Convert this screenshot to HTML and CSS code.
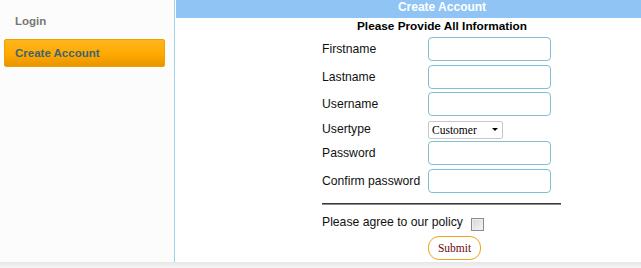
FILE: index.html
```html
<!DOCTYPE html>
<html>
<head>
<meta charset="utf-8">
<link rel="stylesheet" href="styles.css">
</head>
<body>
<div class="page">
  <aside class="sidebar">
    <div class="nav-link">Login</div>
    <div class="nav-active">Create Account</div>
  </aside>
  <main class="main">
    <div class="header">Create Account</div>
    <div class="title">Please Provide All Information</div>
    <form class="form">
      <div class="grid">
        <label class="lbl">Firstname</label><input class="txt" type="text">
        <label class="lbl">Lastname</label><input class="txt" type="text">
        <label class="lbl">Username</label><input class="txt" type="text">
        <label class="lbl">Usertype</label>
        <span class="select-wrap"><select class="sel"><option>Customer</option></select></span>
        <label class="lbl">Password</label><input class="txt" type="password">
        <label class="lbl">Confirm password</label><input class="txt" type="password">
      </div>
      <div class="rule"></div>
      <div class="policy"><span class="lbl">Please agree to our policy</span><input class="chk" type="checkbox"></div>
      <div class="actions"><button class="submit" type="button">Submit</button></div>
    </form>
  </main>
</div>
<div class="footer-band"></div>
</body>
</html>
```

FILE: styles.css
```css
html, body {
  margin: 0;
  padding: 0;
  overflow: hidden;
  background: #f3f3f3;
  font-family: "Liberation Sans", Arial, sans-serif;
}
.page {
  display: flex;
  height: 262px;
  background: #fff;
}
.sidebar {
  width: 174px;
  flex-shrink: 0;
  background: #fcfcfc;
  border-right: 1px solid #9fd3ea;
  padding-top: 14px;
}
.nav-link {
  padding-left: 15px;
  font-size: 11.5px;
  font-weight: bold;
  line-height: 15px;
  color: #777;
}
.nav-active {
  margin: 10px 0 0 4px;
  width: 161px;
  height: 28px;
  box-sizing: border-box;
  border: 1px solid #eaa300;
  border-radius: 2px;
  background: linear-gradient(#ffb51d, #ffa900 55%, #e89500);
  color: #3d6475;
  font-size: 11.5px;
  font-weight: bold;
  line-height: 26px;
  padding-left: 10px;
}
.main {
  margin-left: 1px;
  flex: 1;
  min-width: 0;
}
.header {
  height: 18px;
  background: #8fc4f5;
  color: #fff;
  font-size: 12px;
  font-weight: bold;
  line-height: 15px;
  text-align: center;
  padding-left: 67px;
}
.title {
  margin-top: 1px;
  padding-left: 67px;
  font-size: 11.8px;
  font-weight: bold;
  line-height: 15px;
  text-align: center;
  color: #000;
}
.form {
  width: 239px;
  margin: 3px 0 0 146px;
}
.grid {
  display: grid;
  grid-template-columns: 106px 123px;
  row-gap: 3.6px;
  align-items: center;
}
.lbl {
  font-size: 12.2px;
  line-height: 15px;
  color: #111;
  white-space: nowrap;
  padding-top: 1px;
}
.txt {
  width: 123px;
  height: 24px;
  box-sizing: border-box;
  margin: 0;
  border: 1px solid #80c0d3;
  border-radius: 4px;
  background: #fff;
  outline: none;
}
.select-wrap {
  position: relative;
  width: 75px;
  height: 18px;
}
.select-wrap::after {
  content: "";
  position: absolute;
  left: 64px;
  top: 8px;
  border-left: 3px solid transparent;
  border-right: 3px solid transparent;
  border-top: 3.5px solid #000;
  pointer-events: none;
}
.sel {
  appearance: none;
  -webkit-appearance: none;
  width: 75px;
  height: 18px;
  box-sizing: border-box;
  margin: 0;
  border: 1px solid #c8c8c8;
  border-radius: 2px;
  background: #fff;
  font-family: "Liberation Serif", "Times New Roman", serif;
  font-size: 11.5px;
  color: #000;
  padding: 0 0 0 3px;
  line-height: 16px;
}
.rule {
  margin-top: 9.7px;
  height: 0;
  border-top: 1px solid #3a3a3a;
  border-bottom: 1px solid #8a8a8a;
}
.policy {
  display: flex;
  align-items: flex-start;
  gap: 8px;
  margin-top: 9px;
}
.policy .lbl {
  padding-top: 1px;
}
.chk {
  appearance: none;
  -webkit-appearance: none;
  width: 13px;
  height: 13px;
  margin: 4px 0 0 0;
  box-sizing: border-box;
  border: 1px solid #8c8c8c;
  background: linear-gradient(135deg, #d6d6d6, #f6f6f6);
  box-shadow: inset 0 0 0 1px #eee;
}
.actions {
  padding-left: 106px;
  margin-top: 5px;
}
.submit {
  width: 53px;
  height: 24px;
  box-sizing: border-box;
  margin: 0;
  padding: 0;
  border: 1px solid #f0a21a;
  border-radius: 11px;
  background: #fff;
  font-family: "Liberation Serif", "Times New Roman", serif;
  font-size: 11.5px;
  color: #6b0a0a;
}
.footer-band {
  height: 6px;
  background: linear-gradient(#e6e6e6, #f5f5f5);
}
```
